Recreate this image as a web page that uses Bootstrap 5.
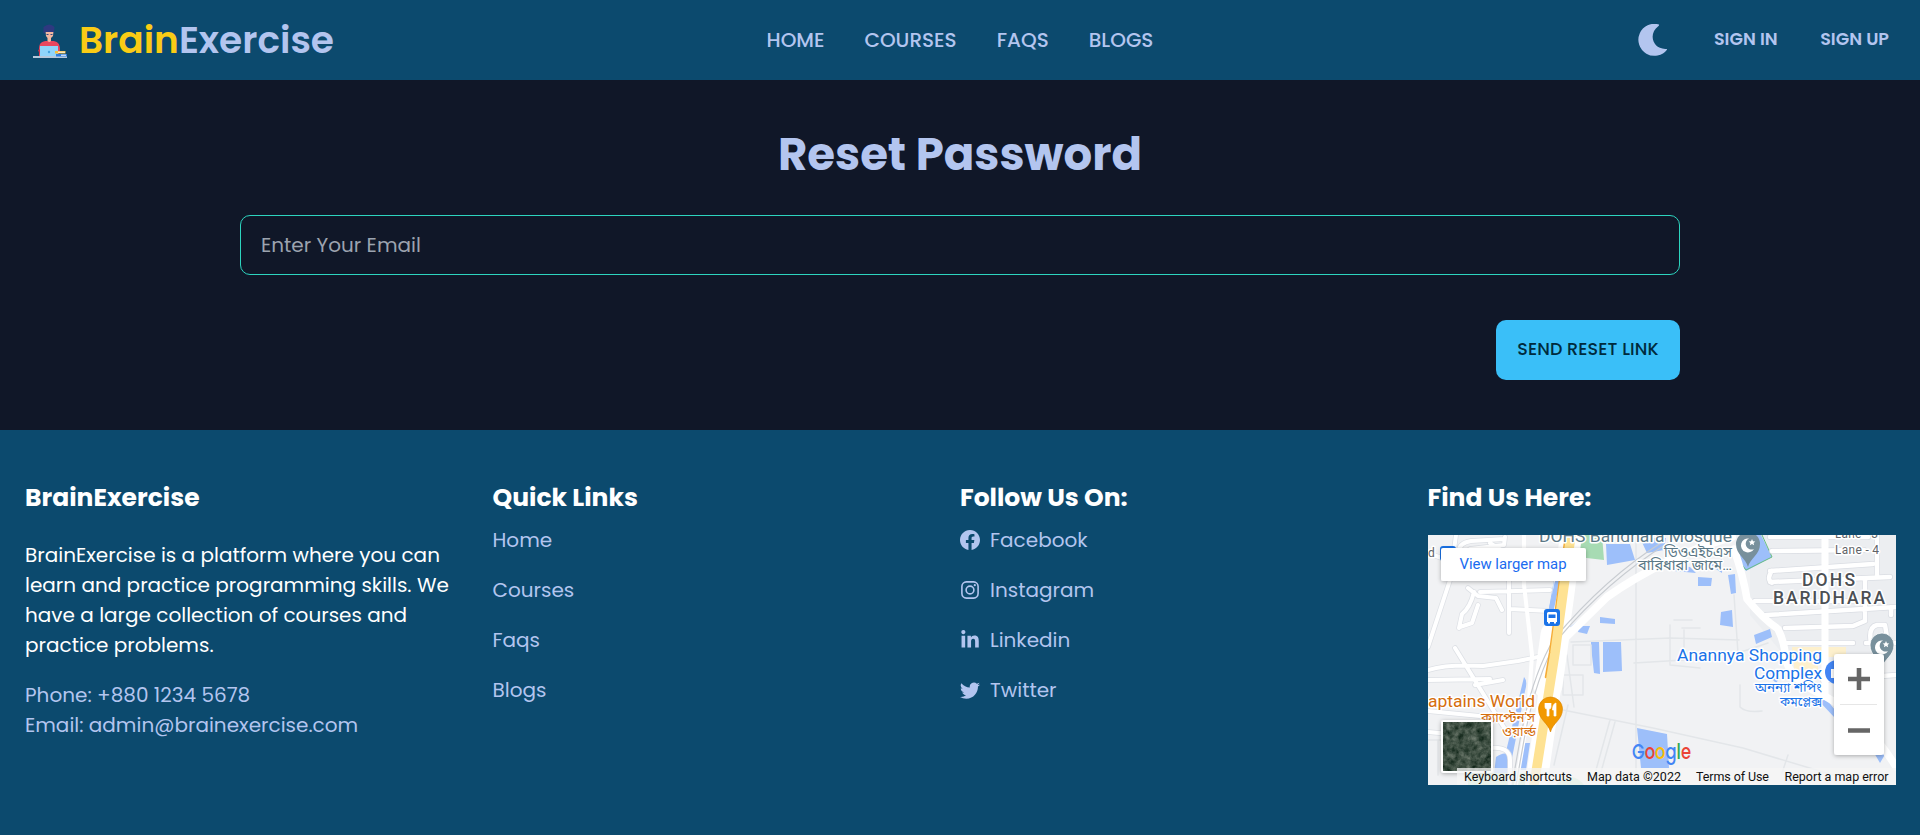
<!DOCTYPE html>
<html lang="en">
<head>
<meta charset="utf-8">
<meta name="viewport" content="width=device-width, initial-scale=1">
<title>BrainExercise - Reset Password</title>
<link href="https://cdn.jsdelivr.net/npm/bootstrap@5.3.0/dist/css/bootstrap.min.css" rel="stylesheet">
<style>
:root{--sea:#0c4a6e;--night:#101728;--ink:#b3c5ef}
body{background:var(--sea);color:var(--ink);font-family:Poppins,Inter,"Open Sans",sans-serif;font-size:20px;line-height:30px;overflow:hidden}
a{color:inherit;text-decoration:none}
.topbar{height:80px;padding:0 31px}
.brand-name{font-size:37.5px;font-weight:600;line-height:80px;margin-left:10px}
.brand-name span{color:#facc15}
.menu{gap:40px;font-weight:500}
.acct{gap:42.5px;font-size:17.5px;font-weight:600}
.acct a{padding-bottom:2px}
.acct svg{margin-right:2px}
.reset{background:var(--night);height:350px;padding:45px 240px 0}
.reset h1{font-size:45px;font-weight:700;line-height:60px;margin-bottom:30px}
.field,.field:focus{height:60px;border:1px solid #2dd4bf;border-radius:10px;background:transparent;color:var(--ink);font-size:20px;padding:0 20px}
.field::placeholder{color:#9ca3af;opacity:1}
.send{height:60px;width:184px;border-radius:10px;background:#3abff8;color:#002b3d;font-size:17.5px;font-weight:500;letter-spacing:.12px;padding:0 0 2px;margin-top:45px}
.foot{padding:50px 25px 0}
.foot h2{font-size:25px;font-weight:700;color:#fff;line-height:35px;margin:0}
.links{gap:20px;margin-top:10px}
.links a{gap:10px;height:30px}
.about{color:#fff;margin:25px 0 20px}
.map{width:468px;height:250px;margin-top:20px;overflow:hidden}
.map text{font-family:Roboto,"Noto Sans Bengali",sans-serif}
.map .wordmark{font-family:Poppins,sans-serif}
.halo text{paint-order:stroke;stroke:#fff;stroke-width:3px;stroke-linejoin:round}
</style>
</head>
<body>
<nav class="topbar d-flex align-items-center position-relative">
  <a href="#" class="d-flex align-items-center">
    <svg width="38" height="38" viewBox="0 0 38 38">
      <path d="M2 35h34v2H2z" fill="#b7c9dc"/>
      <path d="M8 28c0-6 3-8 8-8h5c5 0 8 2 8 9l-2 6H8z" fill="#e8475f"/>
      <path d="M7 29l2 5h2v-7z" fill="#c93450"/>
      <path d="M14.500 10h8l-.5 5-2 2v3q-1.500 2-3.500 0v-3l-1.500-2z" fill="#f3b7a0"/>
      <path d="M12.500 6q6-5 11 0l-.5 5h-9l-.5 2-1-1z" fill="#2e3980"/>
      <path d="M15.500 13.500h2m2 0h2" stroke="#38477f"/>
      <path d="M9 25h18v10H9z" fill="#90d5fb"/>
      <circle cx="18" cy="31" r="1.200" fill="#46a4e0"/>
      <path d="M24 30h10.500v2.500H24z" fill="#f7bd3b"/><path d="M27 30.700h7v1h-7z" fill="#fff"/>
      <path d="M25 33h11v2.500H25z" fill="#2d7ee0"/><path d="M30 33.700h5v1h-5z" fill="#fff"/>
    </svg>
    <span class="brand-name"><span>Brain</span>Exercise</span>
  </a>
  <div class="menu d-flex position-absolute top-50 start-50 translate-middle">
    <a href="#">HOME</a><a href="#">COURSES</a><a href="#">FAQS</a><a href="#">BLOGS</a>
  </div>
  <div class="acct d-flex align-items-center ms-auto">
    <svg width="32" height="32" viewBox="0 0 32 32" fill="#b3c5ef"><path d="M22 .5A16 16 0 1 0 30.200 25.400A1 1 0 0 0 29.500 24.900C16 26 10.500 10 21.500 2Q22.400 1.200 22 .5z"/></svg>
    <a href="#">SIGN IN</a><a href="#">SIGN UP</a>
  </div>
</nav>
<main class="reset d-flex flex-column">
  <h1 class="text-center">Reset Password</h1>
  <input class="form-control shadow-none field" type="email" placeholder="Enter Your Email">
  <button class="btn border-0 send align-self-end">SEND RESET LINK</button>
</main>
<footer class="foot">
  <div class="row g-0">
    <div class="col-3">
      <h2>BrainExercise</h2>
      <p class="about">BrainExercise is a platform where you can<br>learn and practice programming skills. We<br>have a large collection of courses and<br>practice problems.</p>
      <div>Phone: +880 1234 5678</div>
      <div>Email: admin@brainexercise.com</div>
    </div>
    <div class="col-3">
      <h2>Quick Links</h2>
      <div class="links d-flex flex-column">
        <a href="#">Home</a><a href="#">Courses</a><a href="#">Faqs</a><a href="#">Blogs</a>
      </div>
    </div>
    <div class="col-3">
      <h2>Follow Us On:</h2>
      <div class="links d-flex flex-column">
        <a href="#" class="d-flex align-items-center"><svg width="20" height="20" viewBox="0 0 16 16" fill="currentColor"><path d="M16 8.049c0-4.446-3.582-8.050-8-8.050C3.580 0-.002 3.603-.002 8.050c0 4.017 2.926 7.347 6.750 7.951v-5.625h-2.030V8.050H6.750V6.275c0-2.017 1.195-3.131 3.022-3.131.876 0 1.791.157 1.791.157v1.980h-1.009c-.993 0-1.303.621-1.303 1.258v1.510h2.218l-.354 2.326H9.250V16c3.824-.604 6.750-3.934 6.750-7.951z"/></svg>Facebook</a>
        <a href="#" class="d-flex align-items-center"><svg width="20" height="20" viewBox="0 0 20 20" fill="none" stroke="currentColor" stroke-width="1.600"><rect x="1.900" y="1.900" width="16.200" height="16.200" rx="4.500"/><circle cx="10" cy="10" r="3.900"/><circle cx="14.800" cy="5.200" r="1.100" fill="currentColor" stroke="none"/></svg>Instagram</a>
        <a href="#" class="d-flex align-items-center"><svg width="20" height="20" viewBox="-32 0 512 512" fill="currentColor"><path d="M100.280 448H7.400V148.900h92.880zM53.790 108.100C24.090 108.100 0 83.500 0 53.800a53.790 53.790 0 0 1 107.580 0c0 29.700-24.100 54.300-53.790 54.300zM447.900 448h-92.680V302.400c0-34.700-.7-79.200-48.290-79.200-48.290 0-55.690 37.700-55.690 76.700V448h-92.780V148.900h89.080v40.800h1.300c12.400-23.500 42.690-48.300 87.880-48.300 94 0 111.280 61.900 111.280 142.300V448z"/></svg>Linkedin</a>
        <a href="#" class="d-flex align-items-center"><svg width="20" height="20" viewBox="0 0 16 16" fill="currentColor"><path d="M5.026 15c6.038 0 9.341-5.003 9.341-9.334 0-.14 0-.282-.006-.422A6.685 6.685 0 0 0 16 3.542a6.658 6.658 0 0 1-1.889.518 3.301 3.301 0 0 0 1.447-1.817 6.533 6.533 0 0 1-2.087.793A3.286 3.286 0 0 0 7.875 6.030a9.325 9.325 0 0 1-6.767-3.429 3.289 3.289 0 0 0 1.018 4.382A3.323 3.323 0 0 1 .64 6.575v.045a3.288 3.288 0 0 0 2.632 3.218 3.203 3.203 0 0 1-.865.115 3.230 3.230 0 0 1-.614-.057 3.283 3.283 0 0 0 3.067 2.277A6.588 6.588 0 0 1 .78 13.580a6.320 6.320 0 0 1-.78-.045A9.344 9.344 0 0 0 5.026 15z"/></svg>Twitter</a>
      </div>
    </div>
    <div class="col-3">
      <h2>Find Us Here:</h2>
      <div class="map">
        <svg class="d-block" width="468" height="250" viewBox="0 0 468 250">
          <defs>
            <filter id="sh" x="-20%" y="-20%" width="140%" height="150%"><feDropShadow dx="0" dy="1" stdDeviation="2" flood-opacity=".3"/></filter>
            <filter id="grain" x="0" y="0" width="100%" height="100%" color-interpolation-filters="sRGB"><feTurbulence type="fractalNoise" baseFrequency=".16" numOctaves="4" seed="4"/><feColorMatrix values=".55 0 0 0 -.03  .5 0 0 0 .06  .5 0 0 0 .01  0 0 0 0 1"/></filter>
            <path id="pin" d="M0 20C-2 11-12 8-12-3a12 12 0 0 1 24 0C12 8 2 11 0 20z"/>
            <g id="crescent"><path d="M1-9.500A7 7 0 1 0 6 1A5.500 5.500 0 0 1 1-9.500z" fill="#fff"/><path d="M4-9l1 2.200 2.300.2-1.700 1.600.5 2.300L4-4l-2.100 1.300.5-2.300L.7-6.600 3-6.800z" fill="#fff"/></g>
            <path id="west" d="M28 0L22 45 0 112M22 26L0 18M31 18q-1-10 12-12l33-2M42 14l34-4 1-8M62 8l12 8M0 135q20-6 55-4l35-5 20-4M27 113l53 86M47 150l28-5M0 145l62-1M81 45v53M46 57q-4 16-12 22l-3 14M40 53l10 8 18 2 6 12M52 57l70-2M81 74l41 2M60 24l50 12M32 92l12-4 6-18M0 176l62 6M0 197l22 2M62 213q20-2 20 12v25"/>
            <path id="east" d="M342 36l103-7M344 16l92-1M342 2h98M342 47l120-5M344 36q-6 8 0 12M327 66h100M338 80l130-8M357 93l68-2 12-5M357 108h68M449 0v40M437 45v40M463 72v8M443 108q-3-16 6-18l8 0 2 12M438 108h30M395 145l73-5"/>
          </defs>
          <rect width="468" height="250" fill="#f1f2f4"/>
          <!-- residential blocks to the east -->
          <path d="M322 0h146v125H360L322 80z" fill="#eceef1"/>
          <path d="M364 112h54v10h-54zM366 122h24v20h-24z" fill="#fdf0cd"/>
          <!-- water and parks -->
          <g fill="#9dbffa">
            <path d="M178 9h24l5 16-28 5zM212 3h26l-2 12-17 3zM318 0h15l11 22-26 14-8-10zM126 45h6l-4 28h-7zM142 92l26-21-12 18zM151 91h11l-3 8-9-2zM172 82l15 2v5l-15-1zM163 107h8l1 32-6-1-3-26zM175 107h18l1 29-19 1zM270 42l14 1-1 8h-13zM300 40l7-1 1 19-5 1zM293 77l11-2 1 17-13-2zM326 100l16-6 2 8-16 7zM209 193l30 6 2 34h-28zM343 143l9 0-4 5zM390 165h9l12 15-5 2zM445 216h14l-7 12zM96 142q4 4 1 14l-9 47-6 30h-8zM95 208h7l-4 27h-8zM68 222q13-9 15 5v12H66zM244 30l18 2 6 6-22-2zM282 30l12-6v14z"/>
          </g>
          <path d="M152 0h22l2 25-26-3z" fill="#a7dbb3"/><path d="M334 0l10 22-26 13-6-8" fill="none" stroke="#67bd82"/>
          <path d="M128 250q15-16 28 0zM40 238h60v12H40z" fill="#c2e5cb"/>
          <g fill="none" stroke-linejoin="round" stroke-linecap="round">
            <!-- lot outlines -->
            <path d="M135 175l90 18 90 20 100 30M140 170l-14 60M182 185l-14 50M187 187l-14 50M208 0v250M206 128l50-3v-30M242 90v40l30 3M306 60l4 58 30-10M135 140h20v20h-20zM145 110h18v20h-18zM139 120l7 52M360 220l-6 18M246 85h18M254 93h18M143 107l100-4 68 2M312 150v22q6 6 22 4M0 205h40M10 205v35" stroke="#e3e6e9" stroke-width="1.500"/>
            <!-- side streets: casing under fill -->
            <use href="#west" stroke="#dde0e5" stroke-width="5.500"/><use href="#west" stroke="#fff" stroke-width="4"/>
            <use href="#east" stroke="#dadde3" stroke-width="6"/><use href="#east" stroke="#fff" stroke-width="4.500"/>
            <path d="M96 0v50l8 70-4 60-12 70" stroke="#fff" stroke-width="4"/>
            <!-- arterial roads -->
            <path d="M397 0v160" stroke="#fff" stroke-width="7"/>
            <path d="M306 14Q315 40 319 64Q335 84 350 94Q357 108 358 126Q366 148 395 160Q440 185 468 232" stroke="#fff" stroke-width="7.500"/>
            <path d="M304 2Q236 22 179 62L128 112" stroke="#fff" stroke-width="8"/>
            <path d="M143 0L135 62 127 120 108 250" stroke="#fff" stroke-width="22"/>
            <path d="M127 100L120 150" stroke="#fff" stroke-width="29"/>
            <path d="M240 8Q180 45 130 104 108 140 96 205L88 250M236 6Q178 42 126 104 104 140 92 205L84 250" stroke="#c8ccd1" stroke-width="1.200"/>
            <path d="M129 48l-6 28" stroke="#9dbffa" stroke-width="5"/>
            <path d="M138 0L130 60 122 118 118 142" stroke="#f5ac38" stroke-width="2.500"/>
            <path d="M143 0L135 58 127 118 106 250" stroke="#fee293" stroke-width="9.500"/>
          </g>
          <!-- place names -->
          <g class="halo" font-size="17">
            <g fill="#5b7886"><text x="111" y="7" textLength="193" lengthAdjust="spacingAndGlyphs">DOHS Baridhara Mosque</text>
            <text x="236" y="22" textLength="68" lengthAdjust="spacingAndGlyphs" font-size="14">ডিওএইচএস</text><text x="210" y="35" textLength="94" lengthAdjust="spacingAndGlyphs" font-size="14">বারিধারা জামে…</text></g>
            <g fill="#5f6368" font-size="12"><text x="407" y="3" textLength="43">Lane - 3</text><text x="407" y="19" textLength="44">Lane - 4</text><text x="0" y="22">d</text></g>
            <g fill="#4b4f54" font-weight="500" font-size="17.500"><text x="374" y="51" textLength="53">DOHS</text><text x="345" y="69" textLength="112">BARIDHARA</text></g>
            <g fill="#1a73e8"><text x="249" y="126" textLength="145" lengthAdjust="spacingAndGlyphs">Anannya Shopping</text><text x="326" y="144" textLength="68" lengthAdjust="spacingAndGlyphs">Complex</text><text x="327" y="157" textLength="67" lengthAdjust="spacingAndGlyphs" font-size="13">অনন্যা শপিং</text><text x="352" y="171" textLength="42" lengthAdjust="spacingAndGlyphs" font-size="13">কমপ্লেক্স</text></g>
            <g fill="#d56e0c"><text x="0" y="172" textLength="107" lengthAdjust="spacingAndGlyphs">aptains World</text><text x="53" y="187" textLength="54" lengthAdjust="spacingAndGlyphs" font-size="13">ক্যাপ্টেন'স</text><text x="74" y="201" textLength="34" lengthAdjust="spacingAndGlyphs" font-size="13">ওয়ার্ল্ড</text></g>
          </g>
          <!-- markers -->
          <use href="#pin" x="320" y="12" fill="#78909c"/><use href="#crescent" x="320" y="13"/>
          <use href="#pin" x="454" y="113" fill="#78909c" stroke="#fff" stroke-width=".8"/><use href="#crescent" x="454" y="115"/>
          <circle cx="409" cy="137" r="12" fill="#4285f4"/><path d="M403 134h8v9h-8z" fill="#fff"/>
          <use href="#pin" x="122.500" y="177" fill="#f29900" stroke="#d98200" stroke-width=".6"/>
          <path d="M117 168v4q0 2 2 2v7h2v-7q2 0 2-2v-4M120 168v5M128 168v13h-2v-6h-1.500q0-6 3.500-7z" fill="#fff" stroke="#fff" stroke-width=".7"/>
          <rect x="116" y="74" width="16" height="17" rx="3" fill="#1a73e8"/><path d="M120.500 77h7q1.500 0 1.500 1.500V87h-1v1.500h-2V87h-4v1.500h-2V87h-1v-8.500q0-1.500 1.500-1.500zm0 2.500v3.500h7v-3.500z" fill="#fff" fill-rule="evenodd"/>
          <rect x="12" y="11" width="16" height="15" rx="3" fill="#1a73e8"/>
          <!-- controls -->
          <g filter="url(#sh)"><rect x="13" y="13" width="145" height="33" rx="2" fill="#fff"/></g>
          <text x="31.500" y="34" font-size="15" textLength="107" lengthAdjust="spacingAndGlyphs" fill="#1a6bf0">View larger map</text>
          <g filter="url(#sh)"><rect x="13" y="185" width="52" height="53" rx="3" fill="#fff"/></g>
          <rect x="15" y="187" width="48" height="49" filter="url(#grain)"/>
          <g filter="url(#sh)"><rect x="406" y="119" width="50" height="101" rx="3" fill="#fff"/></g>
          <path d="M412 169.500h37" stroke="#e6e6e6"/>
          <path d="M420 144h22M431 133v22M420 195.500h22" stroke="#666" stroke-width="4.600"/>
          <text class="wordmark" x="204" y="224" font-size="20.500" font-weight="500" textLength="59" lengthAdjust="spacingAndGlyphs"><tspan fill="#4285f4">G</tspan><tspan fill="#ea4335">o</tspan><tspan fill="#fbbc05">o</tspan><tspan fill="#4285f4">g</tspan><tspan fill="#34a853">l</tspan><tspan fill="#ea4335">e</tspan></text>
          <path d="M29 233h439v17H29z" fill="#f5f5f5" fill-opacity=".75"/>
          <g font-size="12.500" fill="#111"><text x="36" y="246" textLength="108">Keyboard shortcuts</text><text x="159" y="246" textLength="94">Map data ©2022</text><text x="268" y="246" textLength="73">Terms of Use</text><text x="356.500" y="246" textLength="104">Report a map error</text></g>
        </svg>
      </div>
    </div>
  </div>
</footer>
</body>
</html>
